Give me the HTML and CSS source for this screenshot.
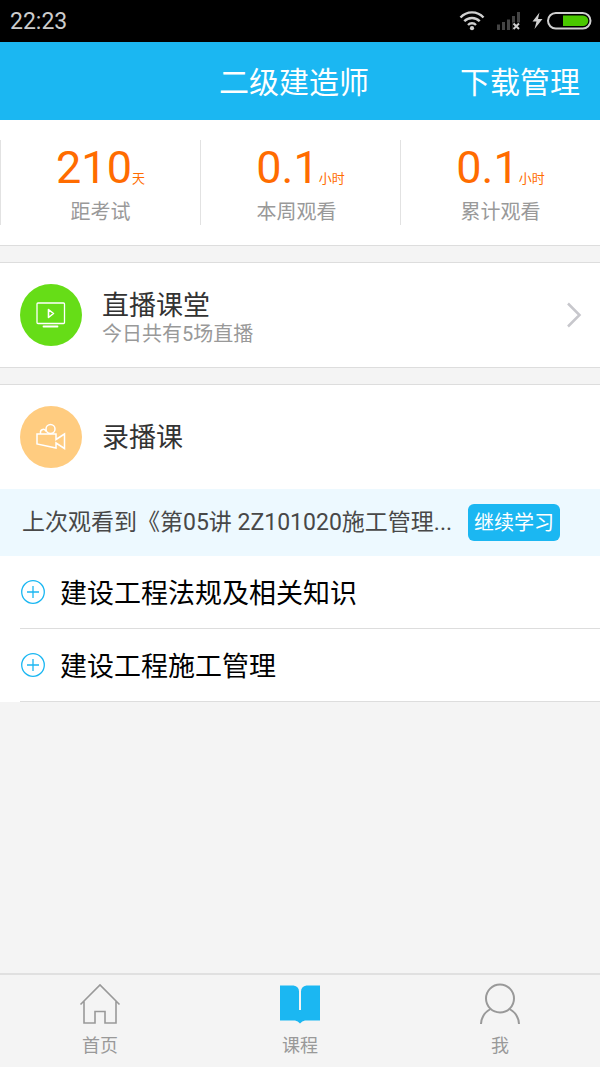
FILE: index.html
```html
<!DOCTYPE html>
<html lang="zh-CN">
<head>
<meta charset="utf-8">
<meta name="viewport" content="width=device-width, initial-scale=1">
<title>二级建造师</title>
<link rel="stylesheet" href="styles.css">
</head>
<body>
<div class="app">
  <div class="status">
    <time class="clock">22:23</time>
    <svg class="status-icons" width="134" height="22" viewBox="0 0 134 22" aria-hidden="true">
      <g fill="none" stroke="#d0d0d0" stroke-width="2.4">
        <path d="M1.5 7.5a15.5 15.5 0 0 1 23 0"/>
        <path d="M5.3 11.3a10.5 10.5 0 0 1 15.4 0"/>
        <path d="M9 15a5.6 5.6 0 0 1 8 0"/>
      </g>
      <circle cx="13" cy="18.2" r="2.1" fill="#d0d0d0"/>
      <g fill="#444">
        <rect x="38" y="14.500" width="3" height="5.500"/>
        <rect x="43" y="12" width="3" height="8"/>
        <rect x="48" y="9.500" width="3" height="10.500"/>
        <rect x="53" y="6" width="3" height="14"/>
        <rect x="58" y="2" width="3" height="18"/>
      </g>
      <path d="M53.500 12.500h8v8h-8z" fill="#000"/>
      <path d="M54.500 13.500l5.500 5.500M60 13.500l-5.500 5.500" stroke="#d0d0d0" stroke-width="2"/>
      <path d="M80.500 2.500l-7 9h4l-2 7.500 8-10h-4.500z" fill="#d0d0d0"/>
      <rect x="89" y="3" width="42.500" height="15.500" rx="7.750" fill="none" stroke="#d0d0d0" stroke-width="2"/>
      <path d="M104 5.500h20a5.250 5.250 0 0 1 0 10.500h-20z" fill="#4ac800"/>
    </svg>
  </div>

  <header class="header">
    <h1 class="title">二级建造师</h1>
    <a class="download" href="#">下载管理</a>
  </header>

  <main class="main">
    <section class="stats">
      <div class="stat">
        <p class="value">210<span class="unit">天</span></p>
        <p class="caption">距考试</p>
      </div>
      <div class="stat">
        <p class="value">0.1<span class="unit">小时</span></p>
        <p class="caption caption-week">本周观看</p>
      </div>
      <div class="stat">
        <p class="value">0.1<span class="unit">小时</span></p>
        <p class="caption">累计观看</p>
      </div>
    </section>

    <section class="panel">
      <a class="entry" href="#">
        <svg class="badge" viewBox="0 0 62 62" aria-hidden="true">
          <circle cx="31" cy="31" r="31" fill="#66dd17"/>
          <g fill="none" stroke="#fff" stroke-width="1.3" stroke-linejoin="round" stroke-linecap="round">
            <rect x="17" y="19" width="27.500" height="20.500" rx="1"/>
            <path d="M28.500 25.500v8l5-4z" stroke-width="1.600"/>
            <path d="M23.500 42.500h14" stroke-width="1.800"/>
          </g>
        </svg>
        <span class="entry-text">
          <span class="entry-title">直播课堂</span>
          <span class="entry-note">今日共有5场直播</span>
        </span>
        <svg class="chevron" width="16" height="26" viewBox="0 0 16 26" aria-hidden="true">
          <path d="M2 1.500L13.500 13 2 24.500" fill="none" stroke="#c7c7cc" stroke-width="2.500"/>
        </svg>
      </a>
    </section>

    <section class="panel panel-courses">
      <div class="entry">
        <svg class="badge" viewBox="0 0 62 62" aria-hidden="true">
          <circle cx="31" cy="31" r="31" fill="#ffcc80"/>
          <g fill="none" stroke="#fff" stroke-width="1.500">
            <path d="M17 28h19v5.500l8.500-5.500v14.500l-8.500-5.500v5L17 38z"/>
            <circle cx="30.500" cy="23" r="4.500"/>
            <path d="M20.500 28v-1.500a2.800 2.800 0 0 1 5.500-1"/>
          </g>
        </svg>
        <h2 class="entry-title">录播课</h2>
      </div>
      <div class="resume">
        <p class="resume-text">上次观看到《第05讲 2Z101020施工管理...</p>
        <button class="resume-button" type="button">继续学习</button>
      </div>
      <ul class="courses">
        <li class="course">
          <button class="course-button" type="button">
            <svg class="plus" width="26" height="26" viewBox="0 0 26 26" aria-hidden="true">
              <circle cx="13" cy="13" r="11.300"/><path d="M7 13h12M13 7v12"/>
            </svg>
            <span class="course-name">建设工程法规及相关知识</span>
          </button>
        </li>
        <li class="course">
          <button class="course-button" type="button">
            <svg class="plus" width="26" height="26" viewBox="0 0 26 26" aria-hidden="true">
              <circle cx="13" cy="13" r="11.300"/><path d="M7 13h12M13 7v12"/>
            </svg>
            <span class="course-name">建设工程施工管理</span>
          </button>
        </li>
      </ul>
    </section>
  </main>

  <nav class="tabs">
    <a class="tab" href="#">
      <svg class="tab-icon" viewBox="0 0 42 42" aria-hidden="true">
        <path d="M1.500 21.500L21 2l19.500 19.500M5 18.500V40h11V28.500h10V40h11V18.500" fill="none" stroke="#999" stroke-width="1.600"/>
      </svg>
      首页
    </a>
    <a class="tab" href="#" aria-current="page">
      <svg class="tab-icon" viewBox="0 0 42 42" aria-hidden="true">
        <path d="M1 2.500h13.500q5.500 1 5.500 6V27h2V8.500q0-5 5.500-6H41V37.500H26q-3 .5-5 3-2-2.500-5-3H1z" fill="#1bb7f2"/>
      </svg>
      课程
    </a>
    <a class="tab" href="#">
      <svg class="tab-icon" viewBox="0 0 42 42" aria-hidden="true">
        <g fill="none" stroke="#999" stroke-width="2">
          <circle cx="21" cy="15.500" r="14"/>
          <path d="M11.500 26Q2.500 31 2 41M30.500 26q9 5 9.500 15"/>
        </g>
      </svg>
      我
    </a>
  </nav>
</div>
</body>
</html>
```

FILE: styles.css
```css
* {
  box-sizing: border-box;
}

body,
h1,
h2,
p,
ul {
  margin: 0;
  padding: 0;
}

body {
  background: #f4f4f4;
  color: #333;
  font-family: Roboto, "Noto Sans CJK SC", sans-serif;
}

h1,
h2 {
  font-weight: 400;
}

a {
  color: inherit;
  text-decoration: none;
}

button {
  border: 0;
  font-family: inherit;
  cursor: pointer;
}

.app {
  display: flex;
  flex-direction: column;
  min-height: 100vh;
}

.status {
  display: flex;
  align-items: center;
  justify-content: space-between;
  padding: 0 7px 0 10px;
  height: 42px;
  background: #000;
}

.clock {
  padding-top: 2px;
  color: #ccc;
  font-size: 23px;
  line-height: 40px;
}

.header {
  display: grid;
  grid-template-columns: 1fr auto 1fr;
  align-items: center;
  padding: 4px 20px 0;
  height: 78px;
  background: #1bb7f2;
  color: #fff;
  font-size: 30px;
  line-height: 44px;
}

.title {
  grid-column: 2;
  padding-right: 12px;
  font-size: 30px;
}

.download {
  justify-self: end;
}

.main {
  flex: 1;
}

.stats {
  display: grid;
  grid-template-columns: repeat(3, 1fr);
  padding: 20px 0;
  border-bottom: 1px solid #ddd;
  background: #fff;
}

.stat {
  height: 85px;
  border-left: 1px solid #e2e2e2;
  text-align: center;
}

.value {
  color: #ff6c00;
  font-size: 45px;
  line-height: 56px;
}

.unit {
  font-size: 13px;
  line-height: 20px;
}

.caption {
  padding-top: 1px;
  color: #999;
  font-size: 20px;
  line-height: 30px;
}

.caption-week {
  padding-right: 8px;
}

.panel {
  margin-top: 16px;
  border-top: 1px solid #ddd;
  border-bottom: 1px solid #ddd;
  background: #fff;
}

.panel-courses {
  border-bottom: 0;
}

.entry {
  display: flex;
  align-items: center;
  gap: 20px;
  padding: 0 18px 0 20px;
  height: 104px;
}

.badge {
  flex: none;
  width: 62px;
  height: 62px;
}

.entry-text {
  flex: 1;
  display: flex;
  flex-direction: column;
  padding-top: 4px;
}

.entry-title {
  padding-top: 2px;
  font-size: 27px;
  line-height: 32px;
}

.entry-note {
  color: #999;
  font-size: 20px;
  line-height: 24px;
}

.resume {
  display: flex;
  align-items: center;
  gap: 12px;
  padding: 15px 40px 15px 22px;
  background: #edf9ff;
}

.resume-text {
  flex: 1;
  min-width: 0;
  overflow: hidden;
  color: #484848;
  font-size: 23px;
  line-height: 36px;
  text-overflow: ellipsis;
  white-space: nowrap;
}

.resume-button {
  padding: 2px 6px 0;
  height: 37px;
  border-radius: 6px;
  background: #1bb7f2;
  color: #fff;
  font-size: 20px;
  line-height: 35px;
}

.courses {
  padding-left: 20px;
  list-style: none;
}

.course {
  border-bottom: 1px solid #ddd;
}

.course-button {
  display: flex;
  align-items: center;
  gap: 14px;
  padding: 0;
  width: 100%;
  height: 72px;
  background: none;
  color: #000;
  font-size: 27px;
  line-height: 40px;
}

.course-name {
  padding-top: 4px;
}

.plus {
  fill: none;
  stroke: #1bb7f2;
  stroke-width: 1.3;
}

.tabs {
  display: grid;
  grid-template-columns: repeat(3, 1fr);
  border-top: 2px solid #e0e0e0;
}

.tab {
  display: flex;
  flex-direction: column;
  align-items: center;
  padding-top: 8px;
  color: #999;
  font-size: 18px;
  line-height: 42px;
}

.tab-icon {
  width: 42px;
  height: 42px;
}
```
